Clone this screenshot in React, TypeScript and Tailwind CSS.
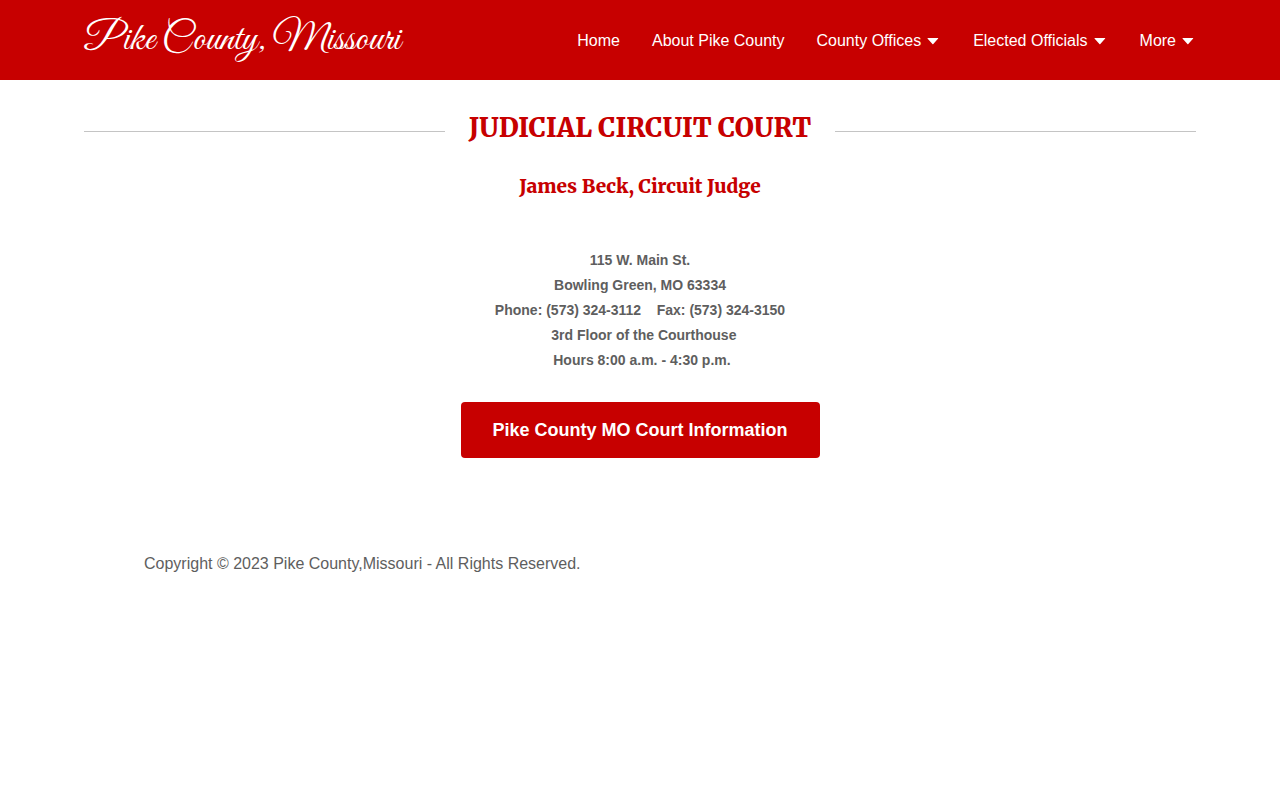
const navItems = [
  { label: 'Home', menu: false },
  { label: 'About Pike County', menu: false },
  { label: 'County Offices', menu: true },
  { label: 'Elected Officials', menu: true },
  { label: 'More', menu: true },
];

const contactLines = [
  '115 W. Main St.',
  'Bowling Green, MO 63334',
  'Phone: (573) 324-3112\u00a0\u00a0\u00a0 Fax: (573) 324-3150',
  '\u00a0\u00a03rd Floor of the Courthouse',
  '\u00a0Hours 8:00 a.m. - 4:30 p.m.',
];

function Caret() {
  return (
    <svg viewBox="0 0 16 16" className="size-4" fill="currentColor" aria-hidden="true">
      <path d="M2.800 4.900h10.100c.4 0 .5.3.3.55L8.300 11a.6.6 0 0 1-.9 0L2.500 5.450c-.2-.25-.1-.55.3-.55z" />
    </svg>
  );
}

function Header() {
  return (
    <header className="bg-[#c70000] text-white">
      <div className="mx-auto flex min-h-20 max-w-[1160px] items-center justify-between px-6">
        <a
          href="#"
          className="whitespace-nowrap font-['Great_Vibes','Liberation_Serif',cursive] text-[40px] leading-12"
        >
          Pike County, Missouri
        </a>
        <nav aria-label="Main" className="pt-0.5">
          <ul className="flex items-center gap-8 whitespace-nowrap text-base">
            {navItems.map((item) => (
              <li key={item.label}>
                {item.menu ? (
                  <button type="button" className="flex items-center gap-1" aria-haspopup="menu">
                    {item.label}
                    <Caret />
                  </button>
                ) : (
                  <a href="#" className="block">
                    {item.label}
                  </a>
                )}
              </li>
            ))}
          </ul>
        </nav>
      </div>
    </header>
  );
}

export default function App() {
  return (
    <div className="bg-white font-['Liberation_Sans',Arial,sans-serif] text-[#5e5e5e]">
      <Header />
      <main className="mx-auto flex max-w-[1160px] flex-col items-center px-6 pt-7">
        <div className="flex w-full items-center gap-6">
          <span className="mt-1.5 h-px flex-1 bg-[#c4c4c4]" />
          <h1 className="font-['Merriweather','Liberation_Serif',serif] text-[26px] leading-10 font-black text-[#c70000]">
            JUDICIAL CIRCUIT COURT
          </h1>
          <span className="mt-1.5 h-px flex-1 bg-[#c4c4c4]" />
        </div>
        <h2 className="mt-6 font-['Merriweather','Liberation_Serif',serif] text-[19px] leading-7 font-black text-[#c70000]">
          James Beck, Circuit Judge
        </h2>
        <address className="mt-12 text-center text-sm leading-[25px] font-bold not-italic">
          {contactLines.map((line) => (
            <p key={line}>{line}</p>
          ))}
        </address>
        <a
          href="#"
          className="mt-[29px] rounded bg-[#c70000] px-8 py-3.5 text-lg leading-7 font-bold text-white"
        >
          Pike County MO Court Information
        </a>
      </main>
      <footer className="mx-auto max-w-[1040px] px-6 pt-[94px] pb-8 text-base">
        <p>Copyright © 2023 Pike County,Missouri - All Rights Reserved.</p>
      </footer>
    </div>
  );
}
